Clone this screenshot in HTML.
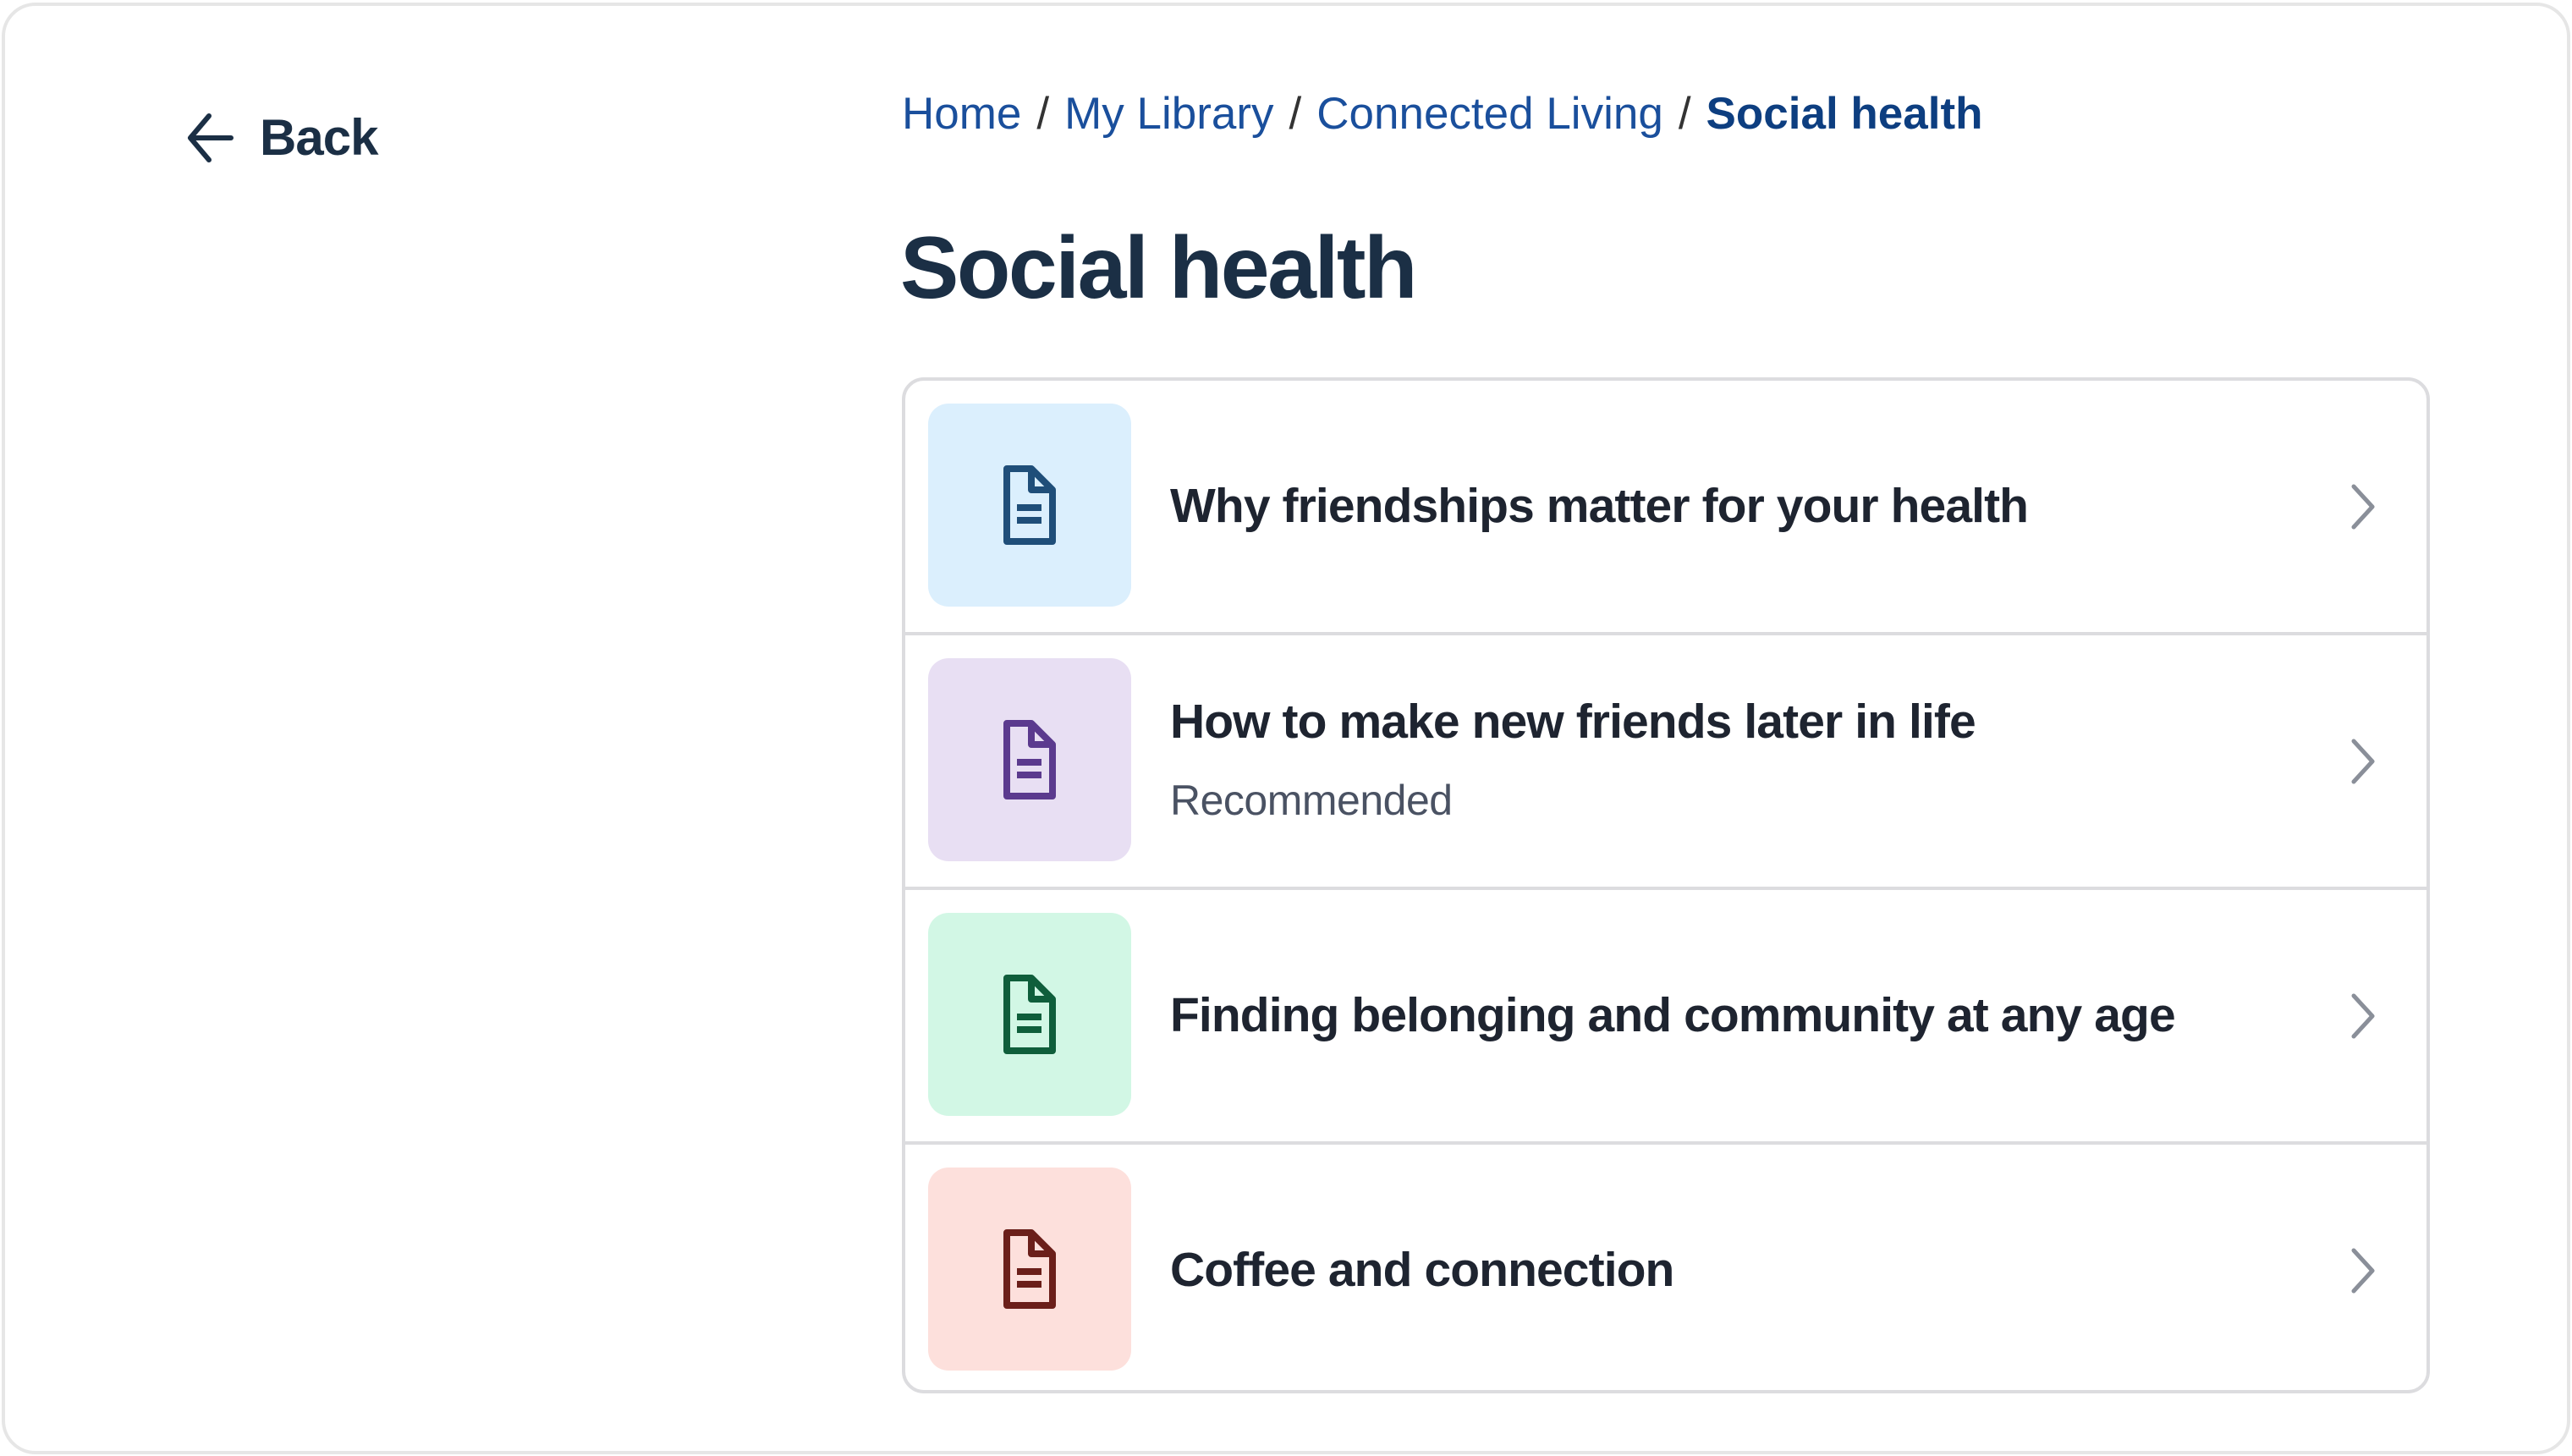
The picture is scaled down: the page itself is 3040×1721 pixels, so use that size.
<!DOCTYPE html>
<html><head><meta charset="utf-8"><style>
*{margin:0;padding:0;box-sizing:border-box}
html,body{width:3040px;height:1721px;background:#fff;overflow:hidden;font-family:"Liberation Sans",sans-serif}
.frame{position:absolute;left:2px;top:3px;width:3036px;height:1716px;border:4px solid #e6e6e6;border-radius:40px}
.back{position:absolute;left:221px;top:128px;display:flex;align-items:center;color:#1b2f45;font-weight:bold;font-size:60px;letter-spacing:-1px}
.back svg{margin-right:30px}
.bc{position:absolute;left:1066px;top:104px;font-size:53px;color:#1a4f9c;letter-spacing:0px;white-space:nowrap}
.bc b{color:#0d3e80}
.bc span.s{color:#333;margin:0 18px}
h1{position:absolute;left:1064px;top:258px;font-size:104px;color:#1b2f45;letter-spacing:-2.5px;font-weight:bold}
.card{position:absolute;left:1066px;top:446px;width:1806px;height:1201px;border:4px solid #dcdcdf;border-radius:26px;overflow:hidden}
.row{position:relative;height:301px;border-bottom:4px solid #dcdcdf}
.row:last-child{border-bottom:none}
.tile{position:absolute;left:27px;top:27px;width:240px;height:240px;border-radius:24px;display:flex;align-items:center;justify-content:center}
.t{position:absolute;left:313px;font-size:57px;font-weight:bold;color:#1e2430;letter-spacing:-0.9px;white-space:nowrap}
.sub{position:absolute;left:313px;top:166px;font-size:50px;color:#4a5263;letter-spacing:-0.5px}
.chev{position:absolute;left:1708px;top:122px}
</style></head><body>
<div class="frame"></div>
<div class="back"><svg width="56" height="58" viewBox="0 0 56 58"><path d="M26 3 L4 29 L26 55 M4 29 H52" fill="none" stroke="#1b2f45" stroke-width="6" stroke-linecap="round" stroke-linejoin="round"/></svg>Back</div>
<div class="bc">Home<span class="s">/</span>My Library<span class="s">/</span>Connected Living<span class="s">/</span><b>Social health</b></div>
<h1>Social health</h1>
<div class="card">
<div class="row"><div class="tile" style="background:#dbeffd"><svg width="64" height="96" viewBox="0 0 64 96"><path d="M5 5 H34 L59 30 V91 H5 Z" fill="none" stroke="#1f4e79" stroke-width="8" stroke-linejoin="round"/><path d="M34 5 V30 H59" fill="none" stroke="#1f4e79" stroke-width="8" stroke-linejoin="round"/><path d="M17 51 H46 M17 66 H46" stroke="#1f4e79" stroke-width="8"/></svg></div><div class="t" style="top:115px">Why friendships matter for your health</div><svg class="chev" width="30" height="54" viewBox="0 0 30 54"><path d="M4 3 L26 27 L4 51" fill="none" stroke="#8a8f99" stroke-width="5" stroke-linecap="round" stroke-linejoin="round"/></svg></div>
<div class="row"><div class="tile" style="background:#e8dff3"><svg width="64" height="96" viewBox="0 0 64 96"><path d="M5 5 H34 L59 30 V91 H5 Z" fill="none" stroke="#5b3a8e" stroke-width="8" stroke-linejoin="round"/><path d="M34 5 V30 H59" fill="none" stroke="#5b3a8e" stroke-width="8" stroke-linejoin="round"/><path d="M17 51 H46 M17 66 H46" stroke="#5b3a8e" stroke-width="8"/></svg></div><div class="t" style="top:69px">How to make new friends later in life</div><div class="sub">Recommended</div><svg class="chev" width="30" height="54" viewBox="0 0 30 54"><path d="M4 3 L26 27 L4 51" fill="none" stroke="#8a8f99" stroke-width="5" stroke-linecap="round" stroke-linejoin="round"/></svg></div>
<div class="row"><div class="tile" style="background:#d2f7e5"><svg width="64" height="96" viewBox="0 0 64 96"><path d="M5 5 H34 L59 30 V91 H5 Z" fill="none" stroke="#0f5e3b" stroke-width="8" stroke-linejoin="round"/><path d="M34 5 V30 H59" fill="none" stroke="#0f5e3b" stroke-width="8" stroke-linejoin="round"/><path d="M17 51 H46 M17 66 H46" stroke="#0f5e3b" stroke-width="8"/></svg></div><div class="t" style="top:115px">Finding belonging and community at any age</div><svg class="chev" width="30" height="54" viewBox="0 0 30 54"><path d="M4 3 L26 27 L4 51" fill="none" stroke="#8a8f99" stroke-width="5" stroke-linecap="round" stroke-linejoin="round"/></svg></div>
<div class="row"><div class="tile" style="background:#fde0dc"><svg width="64" height="96" viewBox="0 0 64 96"><path d="M5 5 H34 L59 30 V91 H5 Z" fill="none" stroke="#6b1f1a" stroke-width="8" stroke-linejoin="round"/><path d="M34 5 V30 H59" fill="none" stroke="#6b1f1a" stroke-width="8" stroke-linejoin="round"/><path d="M17 51 H46 M17 66 H46" stroke="#6b1f1a" stroke-width="8"/></svg></div><div class="t" style="top:115px">Coffee and connection</div><svg class="chev" width="30" height="54" viewBox="0 0 30 54"><path d="M4 3 L26 27 L4 51" fill="none" stroke="#8a8f99" stroke-width="5" stroke-linecap="round" stroke-linejoin="round"/></svg></div>
</div>
</body></html>
